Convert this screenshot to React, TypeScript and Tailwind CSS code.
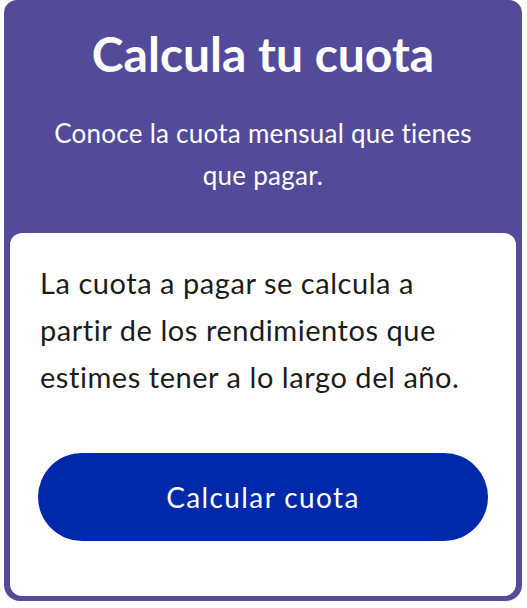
export default function App() {
  return (
    <div
      className="min-h-screen bg-white [font-variant-ligatures:none]"
      style={{ fontFamily: "Lato, 'Open Sans', sans-serif" }}
    >
      <div className="mx-[4px] w-[518px] rounded-t-[13px] rounded-b-[16px] bg-[#534b9a] px-[6px] pb-[5px]">
        {/* header */}
        <div className="pt-[26px] pb-[37px] text-center text-white">
          <h1 className="text-[48px] font-bold leading-[56px]">Calcula tu cuota</h1>
          <p className="mt-[30px] px-[30px] text-[26px] leading-[42px] tracking-[0.25px]">
            Conoce la cuota mensual que tienes que pagar.
          </p>
        </div>

        {/* body */}
        <div className="rounded-[12px] bg-white pt-[26px] pb-[55px]">
          <p className="pl-[30px] pr-[40px] text-[29px] leading-[47px] tracking-[0.55px] text-[#1c1c1c]">
            La cuota a pagar se calcula a partir de los rendimientos que estimes tener a lo largo del año.
          </p>
          <button className="mx-[28px] mt-[53px] flex h-[88px] w-[450px] items-center justify-center rounded-full bg-[#0028aa] text-[28px] tracking-[1.4px] text-white">
            Calcular cuota
          </button>
        </div>
      </div>
    </div>
  );
}
